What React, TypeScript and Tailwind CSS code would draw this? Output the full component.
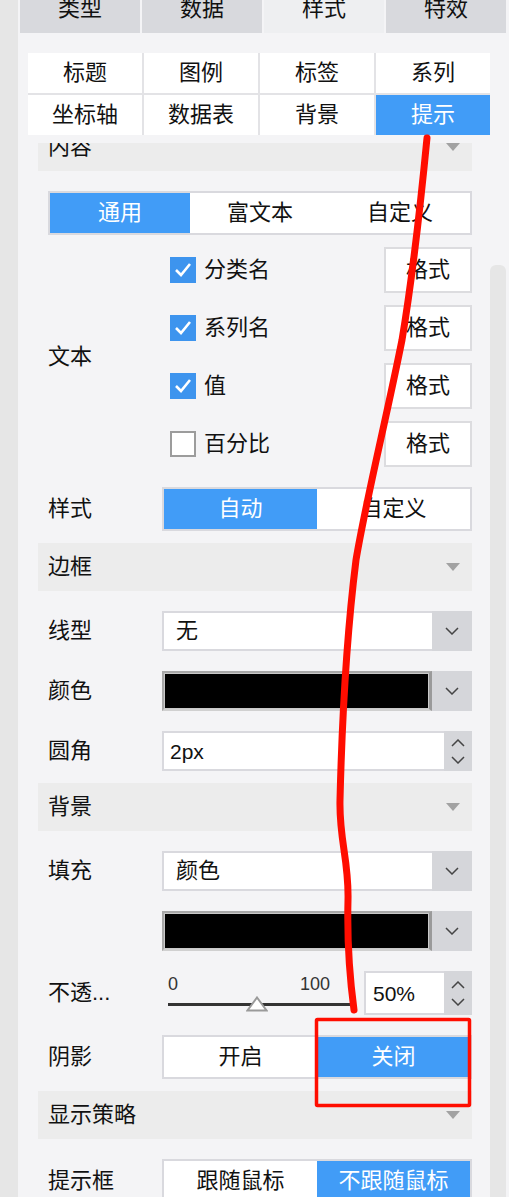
import React from 'react'

function Chevron({ up = false }: { up?: boolean }) {
  return (
    <svg width="14" height="8" viewBox="0 0 14 8" className="block">
      <path d={up ? 'M1 7 L7 1 L13 7' : 'M1 1 L7 7 L13 1'} fill="none" stroke="#454545" strokeWidth="1.5" />
    </svg>
  )
}

function SectionHeader({ title }: { title: string }) {
  return (
    <div className="h-[48px] bg-[#ececec] flex items-center justify-between pl-[10px] pr-[12px]">
      <span className="text-[22px] leading-none text-[#111]">{title}</span>
      <svg width="14" height="8" viewBox="0 0 14 8">
        <polygon points="0,0 14,0 7,8" fill="#a2a2a2" />
      </svg>
    </div>
  )
}

function Segmented({ items, active, h = 'h-[44px]' }: { items: string[]; active: number; h?: string }) {
  return (
    <div className={`flex border-2 border-[#d9d9de] bg-white ${h}`}>
      {items.map((it, i) => (
        <div
          key={it}
          className={`flex-1 flex items-center justify-center text-[22px] leading-none ${
            i === active ? 'bg-[#419cf7] text-white' : 'text-[#111]'
          }`}
        >
          {it}
        </div>
      ))}
    </div>
  )
}

function Row({ label, children, h = 'h-[40px]' }: { label?: string; children: React.ReactNode; h?: string }) {
  return (
    <div className={`flex items-center ${h}`}>
      <div className="w-[124px] shrink-0 pl-[10px] text-[22px] leading-none text-[#111] whitespace-nowrap">{label}</div>
      <div className="flex-1 h-full">{children}</div>
    </div>
  )
}

function Select({ value }: { value: string }) {
  return (
    <div className="flex h-full">
      <div className="flex-1 bg-white border-2 border-r-0 border-[#d9d9de] flex items-center pl-[12px] text-[22px] leading-none text-[#111]">
        {value}
      </div>
      <div className="w-[40px] bg-[#d5d6da] flex items-center justify-center">
        <Chevron />
      </div>
    </div>
  )
}

function Swatch() {
  return (
    <div className="flex h-full">
      <div className="flex-1 bg-[#c9c9c9] border-t-[2px] border-l-[2px] border-b-[2px] border-r-[3px] border-t-[#a8a8a8] border-l-[#a8a8a8] border-b-[#d0d0d0] border-r-[#9a9a9a] p-[1px]">
        <div className="w-full h-full bg-black" />
      </div>
      <div className="w-[40px] bg-[#d5d6da] flex items-center justify-center">
        <Chevron />
      </div>
    </div>
  )
}

function Spinner() {
  return (
    <div className="w-[28px] bg-[#d5d6da] flex flex-col items-center justify-center gap-[9px]">
      <Chevron up />
      <Chevron />
    </div>
  )
}

function Checkbox({ checked }: { checked: boolean }) {
  return checked ? (
    <div className="w-[26px] h-[26px] bg-[#3d94ee] flex items-center justify-center">
      <svg width="18" height="16" viewBox="0 0 18 16">
        <path d="M2 8 L7 13 L16 2" fill="none" stroke="white" strokeWidth="2.6" />
      </svg>
    </div>
  ) : (
    <div className="w-[26px] h-[26px] bg-white border-2 border-[#9c9c9c]" />
  )
}

const checks = [
  { label: '分类名', checked: true },
  { label: '系列名', checked: true },
  { label: '值', checked: true },
  { label: '百分比', checked: false },
]

export default function App() {
  return (
    <div className="relative w-[509px] h-[1197px] overflow-hidden flex bg-[#f4f4f6] font-[family-name:'Liberation_Sans','Noto_Sans_CJK_SC',sans-serif]">
      <div className="w-[18px] shrink-0 bg-[#e6e6e6]" />
      <div className="flex-1 flex flex-col">
        {/* top tabs */}
        <div className="h-[33px] shrink-0 overflow-hidden flex gap-[2px] pl-[2px]">
          {['类型', '数据', '样式', '特效'].map((t, i) => (
            <div
              key={t}
              className={`w-[120px] h-[48px] -mt-[15px] flex items-center justify-center text-[22px] leading-none text-[#111] ${
                i === 2 ? 'bg-[#eeeff1]' : 'bg-[#d8d9dd]'
              }`}
            >
              {t}
            </div>
          ))}
        </div>

        <div className="flex flex-1 min-h-0">
          <div className="w-[472px] shrink-0">
            {/* sub tabs */}
            <div className="ml-[10px] mt-[20px] grid grid-cols-4 gap-[2px] bg-[#e3e3e6]">
              {['标题', '图例', '标签', '系列', '坐标轴', '数据表', '背景', '提示'].map((t) => (
                <div
                  key={t}
                  className={`h-[40px] flex items-center justify-center text-[22px] leading-none ${
                    t === '提示' ? 'bg-[#419cf7] text-white' : 'bg-white text-[#111]'
                  }`}
                >
                  {t}
                </div>
              ))}
            </div>

            <div className="ml-[20px] w-[434px]">
              {/* clipped 内容 header */}
              <div className="mt-[8px] h-[28px] overflow-hidden">
                <div className="-mt-[20px]">
                  <SectionHeader title="内容" />
                </div>
              </div>

              <div className="mt-[20px] ml-[10px]">
                <Segmented items={['通用', '富文本', '自定义']} active={0} />
              </div>

              {/* 文本 checks */}
              <div className="mt-[12px] flex items-center">
                <div className="w-[124px] shrink-0 pl-[10px] text-[22px] leading-none text-[#111]">文本</div>
                <div className="flex-1 flex flex-col gap-[12px]">
                  {checks.map((c) => (
                    <div key={c.label} className="h-[46px] flex items-center">
                      <div className="ml-[8px]">
                        <Checkbox checked={c.checked} />
                      </div>
                      <span className="ml-[8px] flex-1 text-[22px] leading-none text-[#111]">{c.label}</span>
                      <div className="w-[88px] h-[46px] bg-white border-2 border-[#dcdcdf] flex items-center justify-center text-[22px] leading-none text-[#111]">
                        格式
                      </div>
                    </div>
                  ))}
                </div>
              </div>

              <div className="mt-[20px]">
                <Row label="样式" h="h-[44px]">
                  <Segmented items={['自动', '自定义']} active={0} h="h-[44px]" />
                </Row>
              </div>

              <div className="mt-[12px]">
                <SectionHeader title="边框" />
              </div>
              <div className="mt-[20px]">
                <Row label="线型">
                  <Select value="无" />
                </Row>
              </div>
              <div className="mt-[20px]">
                <Row label="颜色">
                  <Swatch />
                </Row>
              </div>
              <div className="mt-[20px]">
                <Row label="圆角">
                  <div className="flex h-full">
                    <div className="flex-1 bg-white border-2 border-r-0 border-[#d9d9de] flex items-center pl-[6px] text-[21px] leading-none text-[#111]">
                      2px
                    </div>
                    <Spinner />
                  </div>
                </Row>
              </div>

              <div className="mt-[12px]">
                <SectionHeader title="背景" />
              </div>
              <div className="mt-[20px]">
                <Row label="填充">
                  <Select value="颜色" />
                </Row>
              </div>
              <div className="mt-[20px]">
                <Row>
                  <Swatch />
                </Row>
              </div>
              <div className="mt-[20px]">
                <Row label="不透..." h="h-[44px]">
                  <div className="flex h-full">
                    <div className="w-[202px] flex flex-col pl-[6px] pr-[12px] pt-[4px]">
                      <div className="flex justify-between text-[18px] leading-none text-[#333]">
                        <span>0</span>
                        <span className="mr-[22px]">100</span>
                      </div>
                      <div className="relative mt-[10px] h-[3px] bg-[#333]">
                        <svg width="22" height="16" viewBox="0 0 22 16" className="absolute left-[78px] -top-[7px]">
                          <polygon points="11,1.5 20.5,14.5 1.5,14.5" fill="white" stroke="#9a9a9a" strokeWidth="2" />
                        </svg>
                      </div>
                    </div>
                    <div className="flex-1 bg-white border-2 border-r-0 border-[#d9d9de] flex items-center pl-[7px] text-[21px] leading-none text-[#111]">
                      50%
                    </div>
                    <Spinner />
                  </div>
                </Row>
              </div>
              <div className="mt-[20px]">
                <Row label="阴影" h="h-[44px]">
                  <Segmented items={['开启', '关闭']} active={1} h="h-[44px]" />
                </Row>
              </div>

              <div className="mt-[12px]">
                <SectionHeader title="显示策略" />
              </div>
              <div className="mt-[20px]">
                <Row label="提示框" h="h-[44px]">
                  <Segmented items={['跟随鼠标', '不跟随鼠标']} active={1} h="h-[44px]" />
                </Row>
              </div>
            </div>
          </div>

          {/* scrollbar */}
          <div className="flex-1 flex">
            <div className="w-[16px] mt-[232px] bg-[#e6e6e6] rounded-t-[6px]" />
          </div>
        </div>
      </div>

      {/* red annotation */}
      <svg width="509" height="1197" viewBox="0 0 509 1197" className="absolute left-0 top-0 pointer-events-none">
        <path
          d="M427 138 C 421 200, 412 280, 402 340 C 386 420, 366 500, 356 560 C 346 640, 342 720, 340 800 C 339 840, 349 860, 348 900 C 347 940, 350 980, 354 1010"
          fill="none"
          stroke="#ff0d00"
          strokeWidth="7"
          strokeLinecap="round"
        />
        <rect x="316.5" y="1019.5" width="153" height="86" fill="none" stroke="#ff0d00" strokeWidth="3.5" rx="1" />
      </svg>
    </div>
  )
}
